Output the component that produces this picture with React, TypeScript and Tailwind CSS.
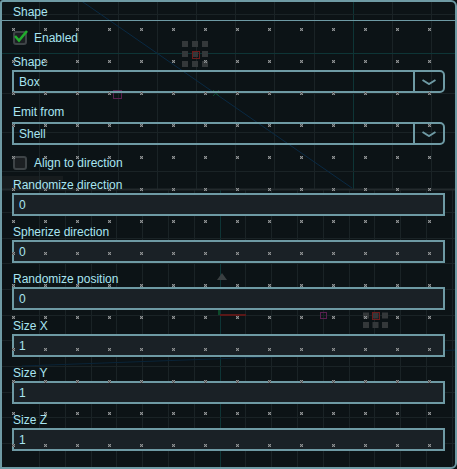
import React from "react";

const font = { fontFamily: '"Liberation Sans", Arial, sans-serif' };

const topCols = Array.from({ length: 11 }, (_, i) => Math.round(39.2 * (i + 1)) + 0.5);
const topRows = [14.5, 53.5, 93.5, 132.5, 171.5];
const lowCols = Array.from({ length: 17 }, (_, i) => Math.round(39 + 25.8 * i) + 0.5);
const lowRows = Array.from({ length: 11 }, (_, i) => Math.round(211.8 + 25.7 * i) + 0.5);
const markerX = Array.from({ length: 14 }, (_, i) => 13 + 32 * i);
const markerY = Array.from({ length: 14 }, (_, i) => 29 + 32 * i);

function Viewport() {
  return (
    <svg className="absolute inset-0" width={457} height={469}>
      <rect x={0} y={176} width={63} height={13} fill="#171c1e" />
      {topCols.map((x) => (
        <line key={"tc" + x} x1={x} y1={0} x2={x} y2={189} stroke={x === 353.5 ? "#0e3536" : "#1a2326"} />
      ))}
      {topRows.map((y) => (
        <line key={"tr" + y} x1={0} y1={y} x2={457} y2={y} stroke={y === 53.5 ? "#0e3536" : "#1a2326"} />
      ))}
      {lowCols.map((x) => (
        <line key={"lc" + x} x1={x} y1={190} x2={x} y2={469} stroke={x === 220.5 ? "#0e3536" : "#1a2326"} />
      ))}
      {lowRows.map((y) => (
        <line key={"lr" + y} x1={0} y1={y} x2={457} y2={y} stroke={y === 314.5 ? "#0e3a3c" : "#1a2326"} />
      ))}
      <line x1={0} y1={189.5} x2={457} y2={189.5} stroke="#232a2d" strokeWidth={2} />
      <line x1={80} y1={0} x2={352} y2={188} stroke="#0a2a44" />
      <line x1={22} y1={366} x2={457} y2={350} stroke="#0a2438" />
      {/* light gizmos */}
      {[0, 1, 2].map((r) =>
        [0, 1, 2].map((c) => (
          <rect key={"g1" + r + c} x={182 + c * 10} y={41 + r * 10} width={6} height={6} fill="#34383a" />
        ))
      )}
      <rect x={192.5} y={51.5} width={7} height={7} fill="none" stroke="#6b1c1c" />
      {[0, 1, 2].map((r) =>
        [0, 1, 2].map((c) => (
          <rect key={"g2" + r + c} x={363 + c * 9.5} y={303 + r * 9.5} width={6} height={6} fill="#34383a" />
        ))
      )}
      <rect x={372.5} y={312.5} width={7} height={7} fill="none" stroke="#6b1c1c" />
      {/* axes gizmo */}
      <rect x={218} y={290} width={2} height={25} fill="#0c4a2a" />
      <rect x={220} y={314} width={26} height={2} fill="#5a1818" />
      <path d="M217 280 L222 273 L227 280 Z" fill="#3a4042" />
      <rect x={113.5} y={90.5} width={8} height={8} fill="none" stroke="#5a1f4f" />
      <rect x={320.5} y={312.5} width={6} height={6} fill="none" stroke="#5a1f4f" />
      <path d="M213 90 L219 96 M219 90 L213 96" stroke="#0d4a2a" />
      <path d="M331 338 L337 344 M337 338 L331 344" stroke="#0d4a2a" />
      <path d="M385 351 L391 357 M391 351 L385 357" stroke="#0d4a2a" />
    </svg>
  );
}

function Markers() {
  return (
    <svg className="absolute inset-0 pointer-events-none" width={457} height={469}>
      {markerY.map((y) =>
        markerX.map((x) => (
          <g key={x + "-" + y}>
            <rect x={x - 1} y={y - 1} width={3} height={3} fill="#505456" />
            <rect x={x - 1} y={y - 1} width={1} height={1} fill="#8e9294" />
            <rect x={x + 1} y={y - 1} width={1} height={1} fill="#8e9294" />
            <rect x={x} y={y} width={1} height={1} fill="#8e9294" />
            <rect x={x - 1} y={y + 1} width={1} height={1} fill="#8e9294" />
            <rect x={x + 1} y={y + 1} width={1} height={1} fill="#8e9294" />
          </g>
        ))
      )}
    </svg>
  );
}

function Check({ on, label }: { on?: boolean; label: string }) {
  return (
    <div className="flex items-center gap-[7px] h-[14px] pl-[1px]">
      <div className="relative w-[14px] h-[14px] rounded-[3px] border-2 border-[#3e4447] bg-[#1c2023]">
        {on && (
          <svg className="absolute -left-[2px] -top-[2px] overflow-visible" width={14} height={14}>
            <path d="M2 5 L6 9.5 L14 0" fill="none" stroke="#21ad2d" strokeWidth={2.6} />
          </svg>
        )}
      </div>
      <span className="text-[12px] leading-[14px] text-[#a9e5f1]">{label}</span>
    </div>
  );
}

function Label({ text, mt }: { text: string; mt: string }) {
  return <div className={`${mt} h-[14px] text-[12px] leading-[14px] text-[#a9e5f1] pl-[1px]`}>{text}</div>;
}

function Select({ value, mt }: { value: string; mt: string }) {
  return (
    <div className={`${mt} flex h-[23px] border-2 border-[#6e9aa4] rounded-r-[5px]`}>
      <div className="flex-1 flex items-center pl-[5px] text-[12px] text-[#a9e5f1]">{value}</div>
      <div className="w-[30px] border-l-2 border-[#6e9aa4] flex items-center justify-center">
        <svg width={14} height={6}>
          <path d="M0.5 1 L7 5 L13.5 1" fill="none" stroke="#6e9aa4" strokeWidth={2} />
        </svg>
      </div>
    </div>
  );
}

function Field({ label, value, mt }: { label: string; value: string; mt: string }) {
  return (
    <>
      <Label text={label} mt={mt} />
      <div className="mt-[1px] h-[23px] border-2 border-[#6e9aa4] bg-[#1a2126] flex items-center pl-[5px] text-[12px] text-[#a9e5f1]">
        {value}
      </div>
    </>
  );
}

export default function App() {
  return (
    <div className="relative w-[457px] h-[469px] overflow-hidden bg-[#0c1316]" style={font}>
      <Viewport />
      <div className="relative h-[469px] border-2 border-[#6e9aa4] rounded-tl-[3px] rounded-tr-[6px] rounded-br-[6px] flex flex-col">
        <div className="h-[18px] pl-[11px] pt-[3px] text-[12px] leading-[14px] text-[#a9e5f1]">Shape</div>
        <div className="h-px bg-[#6e9aa4]" />
        <div className="flex flex-col px-[10px]">
          <div className="mt-[10px]">
            <Check on label="Enabled" />
          </div>
          <Label text="Shape" mt="mt-[10px]" />
          <Select value="Box" mt="mt-[1px]" />
          <Label text="Emit from" mt="mt-[12px]" />
          <Select value="Shell" mt="mt-[3px]" />
          <div className="mt-[11px]">
            <Check label="Align to direction" />
          </div>
          <Field label="Randomize direction" value="0" mt="mt-[8px]" />
          <Field label="Spherize direction" value="0" mt="mt-[9px]" />
          <Field label="Randomize position" value="0" mt="mt-[9px]" />
          <Field label="Size X" value="1" mt="mt-[9px]" />
          <Field label="Size Y" value="1" mt="mt-[9px]" />
          <Field label="Size Z" value="1" mt="mt-[9px]" />
        </div>
      </div>
      <Markers />
    </div>
  );
}
